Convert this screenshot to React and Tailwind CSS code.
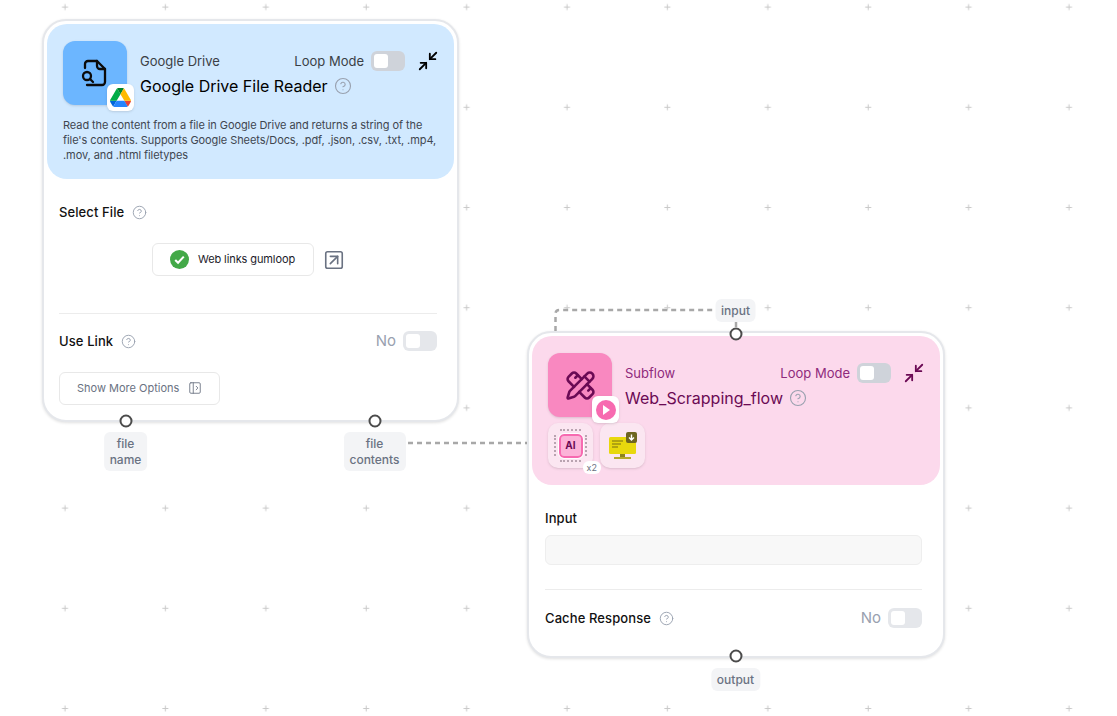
import { CircleHelp, Minimize2, PanelLeftOpen, PencilRuler, SquareArrowUpRight } from "lucide-react";

const FONT = "font-['Inter',sans-serif]";

function Help({ size = 15, className = "" }) {
  return <CircleHelp size={size} strokeWidth={1.5} className={`text-gray-400 shrink-0 ${className}`} />;
}

function Toggle({ className = "bg-gray-300" }) {
  return (
    <div className={`w-[34px] h-5 rounded-md flex items-center px-[3px] ${className}`}>
      <div className="w-[14px] h-[14px] bg-white rounded-[3px]" />
    </div>
  );
}

function Port({ x, y }) {
  return <div className="absolute w-[13px] h-[13px] rounded-full border-2 border-[#4b4b4b] bg-white -translate-x-1/2 -translate-y-1/2" style={{ left: x, top: y }} />;
}

function PortLabel({ x, y, lines }) {
  return (
    <div className="absolute -translate-x-1/2 bg-gray-100 rounded-md px-[6px] pt-[4px] pb-[3px] text-[12px] leading-4 text-center font-medium text-gray-500" style={{ left: x, top: y }}>
      {lines.map((l) => <div key={l}>{l}</div>)}
    </div>
  );
}

function DriveLogo() {
  return (
    <svg viewBox="0 0 87.3 78" className="w-[21px] h-[19px]">
      <path d="m6.6 66.85 3.85 6.65c.8 1.4 1.95 2.5 3.3 3.3l13.75-23.8h-27.5c0 1.55.4 3.1 1.2 4.5z" fill="#0066da" />
      <path d="m43.65 25-13.75-23.8c-1.35.8-2.5 1.9-3.3 3.3l-25.4 44a9.06 9.06 0 0 0 -1.2 4.5h27.5z" fill="#00ac47" />
      <path d="m73.55 76.8c1.35-.8 2.5-1.9 3.3-3.3l1.6-2.75 7.65-13.25c.8-1.4 1.2-2.95 1.2-4.5h-27.502l5.852 11.5z" fill="#ea4335" />
      <path d="m43.65 25 13.75-23.8c-1.35-.8-2.9-1.2-4.5-1.2h-18.5c-1.6 0-3.15.45-4.5 1.2z" fill="#00832d" />
      <path d="m59.8 53h-32.3l-13.75 23.8c1.35.8 2.9 1.2 4.5 1.2h50.8c1.6 0 3.15-.45 4.5-1.2z" fill="#2684fc" />
      <path d="m73.4 26.5-12.7-22c-.8-1.4-1.95-2.5-3.3-3.3l-13.75 23.8 16.15 28h27.45c0-1.55-.4-3.1-1.2-4.5z" fill="#ffba00" />
    </svg>
  );
}

function FileSearchIcon() {
  return (
    <svg viewBox="0 0 26 28" className="w-[26px] h-[28px] -ml-[2px]" fill="none" stroke="#0b0b0b" strokeWidth="2.3" strokeLinecap="round" strokeLinejoin="round">
      <path d="M4 9V5a3 3 0 0 1 3-3h9l8 8v13a3 3 0 0 1-3 3H6" />
      <path d="M16 2v5a3 3 0 0 0 3 3h5" />
      <circle cx="6" cy="17" r="4" />
      <path d="M9 20l3 3" />
    </svg>
  );
}

function Header({ bg, iconBg, textMain, textSub, badge, title, sub, children }) {
  return (
    <div className={`rounded-[20px] px-4 pt-[17px] ${bg}`}>
      <div className="flex">
        <div className={`relative w-16 h-16 rounded-xl shadow-sm flex items-center justify-center shrink-0 ${iconBg}`}>
          {children[0]}
          <div className="absolute left-[44px] top-[43px] w-[27px] h-[27px] bg-white rounded-md shadow-sm flex items-center justify-center">
            {badge}
          </div>
        </div>
        <div className="flex-1 ml-[13px] pt-[9px]">
          <div className="flex items-center">
            <span className={`text-[13px] leading-5 ${textSub}`}>{sub}</span>
            <span className={`ml-auto text-[13px] leading-5 ${textSub}`}>Loop Mode</span>
            <Toggle className="ml-[7px] bg-[#cfd3da]" />
            <Minimize2 size={22} strokeWidth={2} className={`ml-[12px] -mr-[1px] ${textMain}`} />
          </div>
          <div className="flex items-center mt-[2px]">
            <span className={`text-[16px] leading-6 ${textMain}`}>{title}</span>
            <Help size={18} className="ml-[6px]" />
          </div>
        </div>
      </div>
      {children[1]}
    </div>
  );
}

function AiChip() {
  return (
    <div className="relative w-[33px] h-[33px] flex items-center justify-center">
      <div className="absolute top-0 left-[6px] right-[6px] border-t-2 border-dotted border-[#b9a3b0]" />
      <div className="absolute bottom-0 left-[6px] right-[6px] border-t-2 border-dotted border-[#b9a3b0]" />
      <div className="absolute left-0 top-[6px] bottom-[6px] border-l-2 border-dotted border-[#b9a3b0]" />
      <div className="absolute right-0 top-[6px] bottom-[6px] border-l-2 border-dotted border-[#b9a3b0]" />
      <div className="w-6 h-6 rounded-[5px] bg-[#fcb3d8] border-2 border-[#f76ab0] outline outline-1 outline-white flex items-center justify-center text-[10px] font-bold text-[#6b0a54]">AI</div>
    </div>
  );
}

export default function App() {
  return (
    <div className={`relative w-[1117px] h-[716px] bg-white overflow-hidden ${FONT}`}>
      {/* canvas dots */}
      <svg className="absolute inset-0" width="1117" height="716">
        <defs>
          <pattern id="plus" x="15" y="-43" width="100.4" height="100.2" patternUnits="userSpaceOnUse">
            <path d="M47 50h6M50 47v6" stroke="#c9c9c9" strokeWidth="1" fill="none" />
          </pattern>
        </defs>
        <rect width="1117" height="716" fill="url(#plus)" />
      </svg>

      {/* edges */}
      <svg className="absolute inset-0" width="1117" height="716" fill="none" stroke="#a8a8a8" strokeWidth="2.5" strokeDasharray="5 4">
        <path d="M408 443H527" />
        <path d="M555.5 331V314q0-4 4-4H716" />
        <path d="M736 322V328" />
      </svg>

      {/* Google Drive node */}
      <div className="absolute left-[42px] top-[19px] w-[417px] h-[403px] bg-white border-2 border-[#e5e7eb] rounded-[24px] shadow-[0_1px_3px_rgba(0,0,0,0.12)] p-[3px]">
        <Header
          bg="bg-[#d1e9ff] h-[155px]"
          iconBg="bg-[#6cb6ff]"
          textMain="text-black"
          textSub="text-[#3b3f46]"
          sub="Google Drive"
          title="Google Drive File Reader"
          badge={<DriveLogo />}
        >
          <FileSearchIcon />
          <p className="text-[11px] leading-[15px] text-[#3f4650] mt-[13px] tracking-[-0.08px]">
            Read the content from a file in Google Drive and returns a string of the file's contents. Supports Google Sheets/Docs, .pdf, .json, .csv, .txt, .mp4, .mov, and .html filetypes
          </p>
        </Header>

        <div className="pl-[12px] pr-[17px]">
          <div className="flex items-center gap-2 mt-[23px]">
            <span className="text-[13px] leading-5 font-medium text-[#111] tracking-[0.1px]">Select File</span>
            <Help size={15} />
          </div>
          <div className="flex items-center mt-[21px] ml-[93px]">
            <div className="w-[162px] h-[33px] border border-[#e8e8e8] rounded-md flex items-center pl-[17px]">
              <svg viewBox="0 0 20 20" className="w-[19px] h-[19px]">
                <circle cx="10" cy="10" r="10" fill="#43a948" />
                <path d="M5.5 10.5l3 3 6-6.5" stroke="#fff" strokeWidth="2.2" fill="none" />
              </svg>
              <span className="ml-[9px] text-[11px] text-[#1b1b2a] tracking-[-0.1px]">Web links gumloop</span>
            </div>
            <SquareArrowUpRight size={22} strokeWidth={1.75} className="ml-[9px] text-gray-500" />
          </div>
          <div className="h-px bg-[#ececec] mt-[37px]" />
          <div className="flex items-center mt-[16px]">
            <span className="text-[13px] leading-5 font-medium text-[#111] tracking-[0.1px]">Use Link</span>
            <Help size={15} className="ml-2" />
            <span className="ml-auto text-[15px] text-gray-400">No</span>
            <Toggle className="ml-[7px] bg-[#e5e7eb]" />
          </div>
          <div className="w-[161px] h-[33px] mt-[19px] border border-[#e8e8e8] rounded-md flex items-center pl-[17px] text-[11px] text-gray-500">
            Show More Options
            <PanelLeftOpen size={14} strokeWidth={1.5} className="ml-[9px]" />
          </div>
        </div>
      </div>

      {/* Subflow node */}
      <div className="absolute left-[527px] top-[331px] w-[418px] h-[327px] bg-white border-2 border-[#e5e7eb] rounded-[24px] shadow-[0_1px_3px_rgba(0,0,0,0.12)] p-[3px]">
        <Header
          bg="bg-[#fcd9ec] h-[149px]"
          iconBg="bg-[#f988c0]"
          textMain="text-[#6b0a54]"
          textSub="text-[#8f2a7c]"
          sub="Subflow"
          title="Web_Scrapping_flow"
          badge={
            <div className="w-5 h-5 rounded-full bg-[#f76ab0] flex items-center justify-center">
              <div className="w-0 h-0 ml-[2px] border-y-[5px] border-y-transparent border-l-[7px] border-l-white" />
            </div>
          }
        >
          <PencilRuler size={31} strokeWidth={2} className="text-[#6b0a54]" />
          <div className="flex gap-[7px] mt-[6px]">
            <div className="relative w-[45px] h-[45px] rounded-[10px] bg-[#fbe6f1] shadow-sm flex items-center justify-center">
              <AiChip />
              <div className="absolute -right-2 -bottom-[6px] bg-white rounded-md px-1 text-[9px] leading-[13px] text-gray-500">x2</div>
            </div>
            <div className="w-[45px] h-[45px] rounded-[10px] bg-[#fbe6f1] shadow-sm flex items-center justify-center">
              <svg viewBox="0 0 30 28" className="w-[30px] h-[28px]">
                <rect x="1" y="5" width="27" height="17" rx="1.5" fill="#e8d80d" />
                <path d="M4 9h11M4 12h9M4 15h6" stroke="#7a6f12" strokeWidth="1" />
                <rect x="12" y="22" width="5" height="3" fill="#8c8320" />
                <rect x="6" y="25" width="17" height="2" fill="#b5a92c" />
                <rect x="18" y="0" width="11" height="11" rx="2" fill="#6e6520" />
                <path d="M23.5 2.5v5M21 5.5l2.5 2.5 2.5-2.5" stroke="#fff" strokeWidth="1.4" fill="none" />
              </svg>
            </div>
          </div>
        </Header>

        <div className="pl-[13px] pr-[18px]">
          <div className="text-[13px] leading-5 font-medium text-[#111] tracking-[0.1px] mt-[23px]">Input</div>
          <div className="h-[30px] mt-[7px] bg-[#f8f8f8] border border-[#eeeeee] rounded-md" />
          <div className="h-px bg-[#ececec] mt-[24px]" />
          <div className="flex items-center mt-[17px]">
            <span className="text-[13px] leading-5 font-medium text-[#111] tracking-[0.1px]">Cache Response</span>
            <Help size={15} className="ml-2" />
            <span className="ml-auto text-[15px] text-gray-400">No</span>
            <Toggle className="ml-[7px] bg-[#e5e7eb]" />
          </div>
        </div>
      </div>

      {/* ports */}
      <Port x={125.5} y={420.5} />
      <Port x={374.5} y={420.5} />
      <Port x={735.5} y={333.5} />
      <Port x={735.5} y={656} />
      <PortLabel x={125.5} y={432} lines={["file", "name"]} />
      <PortLabel x={374.5} y={432} lines={["file", "contents"]} />
      <PortLabel x={735.5} y={299} lines={["input"]} />
      <PortLabel x={735.5} y={668} lines={["output"]} />
    </div>
  );
}
